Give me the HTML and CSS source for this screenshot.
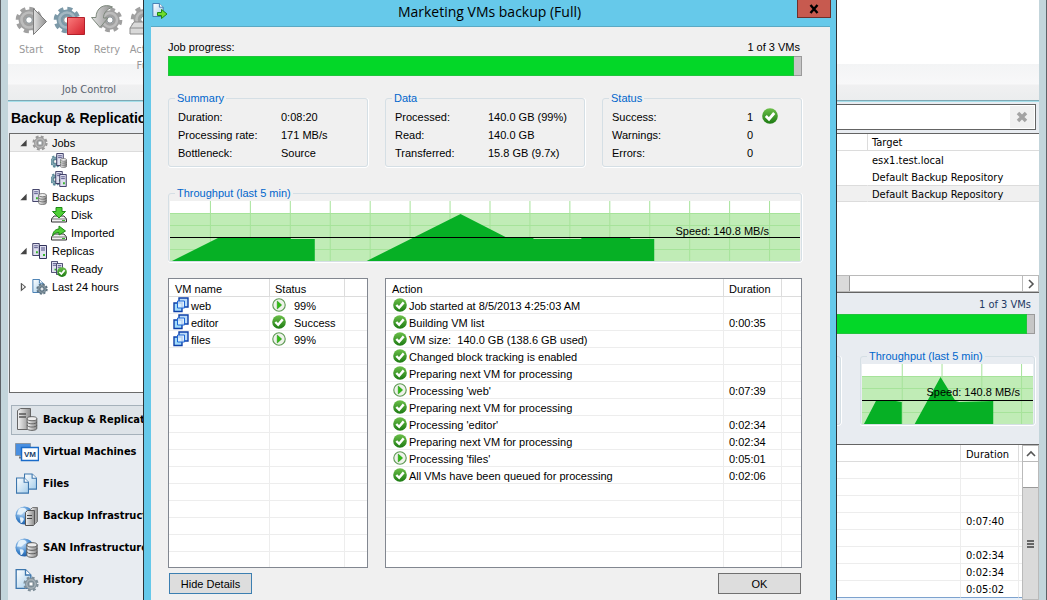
FILE: index.html
```html
<!DOCTYPE html>
<html lang="en">
<head>
  <meta charset="UTF-8" />
  <meta name="viewport" content="width=device-width, initial-scale=1.0" />
  <title>Backup &amp; Replication</title>
  <link rel="stylesheet" href="styles.css">
</head>
<body>

  <!-- icon set -->
  <svg class="sprite" aria-hidden="true">
    <defs>
      <linearGradient id="gGreen" x1="0" y1="0" x2="0" y2="1">
        <stop offset="0" stop-color="#6cc04a" /><stop offset="1" stop-color="#1c7a12" />
      </linearGradient>
      <linearGradient id="gRed" x1="0" y1="0" x2="1" y2="1">
        <stop offset="0" stop-color="#fb7d7d" /><stop offset="1" stop-color="#d41f2c" />
      </linearGradient>
      <linearGradient id="gPage" x1="0" y1="0" x2="1" y2="1">
        <stop offset="0" stop-color="#ffffff" /><stop offset="1" stop-color="#a5cdea" />
      </linearGradient>
      <linearGradient id="gMetal" x1="0" y1="0" x2="1" y2="0">
        <stop offset="0" stop-color="#f6f6f6" /><stop offset="1" stop-color="#8b8b8b" />
      </linearGradient>
      <linearGradient id="gArrow" x1="0" y1="0" x2="1" y2="0">
        <stop offset="0" stop-color="#e2e2e2" /><stop offset="1" stop-color="#8f8f8f" />
      </linearGradient>
      <radialGradient id="gGlobe" cx="0.35" cy="0.3" r="0.8">
        <stop offset="0" stop-color="#cfe6fb" /><stop offset="0.6" stop-color="#3d84cc" /><stop offset="1" stop-color="#1b4f94" />
      </radialGradient>

      <symbol id="check" viewBox="0 0 16 16">
        <circle cx="8" cy="8" r="7.8" fill="url(#gGreen)" />
        <path d="M3.800 8l3.200 3.200L12.200 5" fill="none" stroke="#fff" stroke-width="2.800" />
      </symbol>
      <symbol id="play" viewBox="0 0 16 16">
        <circle cx="8" cy="8" r="7.1" fill="#eef2ea" stroke="#5f9a55" stroke-width="1.300" />
        <path d="M6 3.500l5 4.500-5 4.500z" fill="#2fbf12" stroke="#1d8c0c" stroke-width=".6" />
      </symbol>
      <symbol id="gear" viewBox="0 0 32 32">
        <circle cx="16" cy="16" r="13" fill="none" stroke="currentColor" stroke-width="4.400" stroke-dasharray="5.700 4.510" />
        <circle cx="16" cy="16" r="8" fill="none" stroke="currentColor" stroke-width="8" />
        <circle cx="16" cy="16" r="8.600" fill="none" stroke="#fff" stroke-opacity=".3" stroke-width="3" />
        <circle cx="16" cy="16" r="3.800" fill="#fff" stroke="#6f7a80" stroke-width="1" />
      </symbol>
      <symbol id="db" viewBox="0 0 10 14">
        <path d="M.5 2.500v9c0 2.600 9 2.600 9 0v-9z" fill="url(#gMetal)" stroke="#555" stroke-width=".8" />
        <path d="M.5 5.500c0 2.400 9 2.400 9 0M.5 8.500c0 2.400 9 2.400 9 0" fill="none" stroke="#555" stroke-width=".8" />
        <ellipse cx="5" cy="2.500" rx="4.500" ry="1.900" fill="#eee" stroke="#555" stroke-width=".8" />
      </symbol>
      <symbol id="tower" viewBox="0 0 8 14">
        <path d="M.5 .5h7v13h-7z" fill="#e0e0f0" stroke="#33335c" />
        <path d="M2 3h4M2 5h4" stroke="#4d4d82" />
        <path d="M4 9h2v2H4z" fill="#35b52a" />
      </symbol>
      <symbol id="page" viewBox="0 0 12 15">
        <path d="M.5 .5h7l4 4v10H.5z" fill="url(#gPage)" stroke="#3c76ad" />
        <path d="M7.500 .5v4h4" fill="#fff" stroke="#3c76ad" />
      </symbol>
      <symbol id="drive" viewBox="0 0 16 7">
        <path d="M3 .5h10l2.500 3v3H.5v-3z" fill="#f2f2f2" stroke="#333" />
        <path d="M.5 3.500h15" stroke="#777" />
        <path d="M11 5h3" stroke="#35b52a" />
      </symbol>

      <symbol id="start" viewBox="0 0 32 32">
        <use href="#gear" x="0" y="0" width="28" height="30" />
        <path d="M18.500 3.500v26l13-13z" fill="url(#gArrow)" stroke="#7d7d7d" />
      </symbol>
      <symbol id="stop" viewBox="0 0 32 32">
        <use href="#gear" x="0" y="0" width="28" height="30" />
        <path d="M14.500 12.500h17v17h-17z" fill="url(#gRed)" stroke="#b3202b" />
      </symbol>
      <symbol id="retry" viewBox="0 0 32 32">
        <use href="#gear" x="6" y="1" width="26" height="28" />
        <path d="M.5 12.500l8.500 10 8-9.500h-4.500c0-5 3-8.500 9-11C13-2 5 3 5 12.500z" fill="url(#gArrow)" stroke="#7e897d" />
      </symbol>
      <symbol id="active" viewBox="0 0 32 32">
        <use href="#gear" x="1" y="0" width="28" height="29" />
        <path d="M5 17h22l4 6v6H1v-6z" fill="#d9d9d9" stroke="#8c8c8c" />
        <path d="M1 23h30" stroke="#8c8c8c" />
      </symbol>

      <symbol id="jobBackup" viewBox="0 0 16 16">
        <g color="#5b8a99"><use href="#gear" x="-2" y="2" width="13" height="13" /></g>
        <use href="#tower" x="5" y="0" width="8" height="13" />
        <use href="#db" x="9" y="5" width="7" height="10" />
      </symbol>
      <symbol id="jobReplica" viewBox="0 0 16 16">
        <g color="#5b8a99"><use href="#gear" x="-2" y="2" width="13" height="13" /></g>
        <use href="#tower" x="4" y="0" width="8" height="13" />
        <use href="#tower" x="8" y="3" width="8" height="13" />
      </symbol>
      <symbol id="backups" viewBox="0 0 16 16">
        <use href="#tower" x="0" y="0" width="8" height="13" />
        <use href="#db" x="6" y="4" width="9" height="12" />
      </symbol>
      <symbol id="replicas" viewBox="0 0 16 16">
        <use href="#tower" x="0" y="0" width="8" height="13" />
        <use href="#tower" x="7" y="2" width="8" height="14" />
      </symbol>
      <symbol id="disk" viewBox="0 0 16 16">
        <use href="#drive" x="0" y="8" width="16" height="8" />
        <path d="M5 .5h6v4h3.500L8 11 1.500 4.500H5z" fill="#4fce35" stroke="#1f8a17" />
      </symbol>
      <symbol id="imported" viewBox="0 0 16 16">
        <use href="#drive" x="0" y="8" width="16" height="8" />
        <path d="M1.500 11C2 6 5 4 8 4V1l6.500 5L8 10V7.500C5 7.500 3 8.500 1.500 11z" fill="#4fce35" stroke="#1f8a17" />
      </symbol>
      <symbol id="ready" viewBox="0 0 16 16">
        <use href="#tower" x="0" y="0" width="7" height="12" />
        <use href="#tower" x="5" y="2" width="7" height="12" />
        <use href="#check" x="6" y="6" width="10" height="10" />
      </symbol>
      <symbol id="history" viewBox="0 0 16 16">
        <use href="#page" x="0" y="0" width="12" height="14" />
        <g color="#5c7280"><use href="#gear" x="4" y="4" width="12" height="12" /></g>
      </symbol>
      <symbol id="vm" viewBox="0 0 16 16">
        <path d="M6 1h9v9H6z" fill="#bcdcf8" stroke="#0d3fa8" stroke-width="1.400" />
        <path d="M1 6h8v8.500H1z" fill="#a3dcfa" stroke="#0d3fa8" stroke-width="1.400" />
        <path d="M4.500 4h7v7h-7z" fill="#e6f5ff" fill-opacity=".8" stroke="#1c66d6" />
      </symbol>

      <symbol id="navBackup" viewBox="0 0 24 24">
        <path d="M2.500 2.500l3-2h10v18l-3 3h-10z" fill="url(#gMetal)" stroke="#666" />
        <path d="M4 6h7M4 9h7" stroke="#555" stroke-width="1.500" />
        <use href="#db" x="11" y="8" width="12" height="15" />
      </symbol>
      <symbol id="navVm" viewBox="0 0 24 24">
        <path d="M.5 3.500h15v12H.5z" fill="#4a8fe0" stroke="#8a97a5" />
        <path d="M4 17.500h3" stroke="#777" stroke-width="2" />
        <path d="M6.500 7.500h17v13h-17z" fill="#fff" stroke="#1a6bc9" stroke-width="1.500" />
        <text x="15" y="17" class="vm-mark">VM</text>
      </symbol>
      <symbol id="navFiles" viewBox="0 0 24 24">
        <use href="#page" x="9" y="1" width="13" height="17" />
        <use href="#page" x="1" y="5" width="13" height="17" />
      </symbol>
      <symbol id="globe" viewBox="0 0 20 20">
        <circle cx="10" cy="10" r="9.500" fill="url(#gGlobe)" />
        <path d="M4 3c4-2 7-1 8 1s-3 2-4 4-4 1-6 1zM5 12c3-1 5 1 4 3s-2 3-3 3z" fill="#e3f1fb" />
      </symbol>
      <symbol id="navInfra" viewBox="0 0 24 24">
        <use href="#globe" x="0" y="2" width="19" height="19" />
        <path d="M15.500 5.500l2-2h5v14l-2 2h-5z" fill="url(#gMetal)" stroke="#777" />
        <path d="M10.500 8.500l2-2h7v14l-1 1h-8z" fill="url(#gMetal)" stroke="#555" />
        <path d="M12 11.500h5M12 14.500h5" stroke="#444" />
      </symbol>
      <symbol id="navSan" viewBox="0 0 24 24">
        <use href="#globe" x="0" y="2" width="19" height="19" />
        <use href="#db" x="11" y="6" width="12" height="16" />
      </symbol>
      <symbol id="navHistory" viewBox="0 0 24 24">
        <use href="#page" x="0" y="1" width="17" height="20" />
        <g color="#7f8f99"><use href="#gear" x="8" y="8" width="16" height="16" /></g>
      </symbol>
      <symbol id="job" viewBox="0 0 16 16">
        <use href="#page" x="0" y="0" width="12" height="14" />
        <path d="M5.500 9.500h4v-3L15 11l-5.500 4.500v-3h-4z" fill="#6fdc2c" stroke="#1f8a17" />
      </symbol>
    </defs>
  </svg>

  <!-- main window -->
  <div class="app">
    <div class="ribbon">
      <div class="ribbon-group">
        <div class="ribbon-buttons">
          <button class="tool" disabled><svg class="icon-32"><use href="#start" /></svg>Start</button>
          <button class="tool tool-on"><svg class="icon-32"><use href="#stop" /></svg>Stop</button>
          <button class="tool" disabled><svg class="icon-32"><use href="#retry" /></svg>Retry</button>
          <button class="tool" disabled><svg class="icon-32"><use href="#active" /></svg>Active Full</button>
        </div>
        <div class="ribbon-label">Job Control</div>
      </div>
    </div>

    <div class="workspace">
      <aside class="sidebar">
        <h1>Backup &amp; Replication</h1>
        <ul class="tree">
          <li class="tree-row selected"><i class="arrow open"></i><svg class="icon-16 gear-grey"><use href="#gear" /></svg>Jobs</li>
          <li class="tree-row child"><svg class="icon-16"><use href="#jobBackup" /></svg>Backup</li>
          <li class="tree-row child"><svg class="icon-16"><use href="#jobReplica" /></svg>Replication</li>
          <li class="tree-row"><i class="arrow open"></i><svg class="icon-16"><use href="#backups" /></svg>Backups</li>
          <li class="tree-row child"><svg class="icon-16"><use href="#disk" /></svg>Disk</li>
          <li class="tree-row child"><svg class="icon-16"><use href="#imported" /></svg>Imported</li>
          <li class="tree-row"><i class="arrow open"></i><svg class="icon-16"><use href="#replicas" /></svg>Replicas</li>
          <li class="tree-row child"><svg class="icon-16"><use href="#ready" /></svg>Ready</li>
          <li class="tree-row"><i class="arrow"></i><svg class="icon-16"><use href="#history" /></svg>Last 24 hours</li>
        </ul>
        <nav class="nav">
          <a class="nav-item active" href="#backup"><svg class="icon-24"><use href="#navBackup" /></svg>Backup &amp; Replication</a>
          <a class="nav-item" href="#vms"><svg class="icon-24"><use href="#navVm" /></svg>Virtual Machines</a>
          <a class="nav-item" href="#files"><svg class="icon-24"><use href="#navFiles" /></svg>Files</a>
          <a class="nav-item" href="#infra"><svg class="icon-24"><use href="#navInfra" /></svg>Backup Infrastructure</a>
          <a class="nav-item" href="#san"><svg class="icon-24"><use href="#navSan" /></svg>SAN Infrastructure</a>
          <a class="nav-item" href="#history"><svg class="icon-24"><use href="#navHistory" /></svg>History</a>
        </nav>
      </aside>

      <main class="content">
        <div class="search">
          <input type="text" aria-label="Search" />
          <button class="clear" aria-label="Clear search">
            <svg class="icon-12" viewBox="0 0 12 12"><path d="M2 2l8 8M10 2l-8 8" stroke="#a3a3a3" stroke-width="3.500" /></svg>
          </button>
        </div>

        <div class="jobs">
          <table class="job-table">
            <colgroup><col><col class="col-target"></colgroup>
            <thead><tr><th></th><th>Target</th></tr></thead>
            <tbody>
              <tr><td></td><td>esx1.test.local</td></tr>
              <tr><td></td><td>Default Backup Repository</td></tr>
              <tr class="current"><td></td><td>Default Backup Repository</td></tr>
            </tbody>
          </table>
          <div class="hscroll">
            <div class="hthumb"></div>
            <button class="hnext" aria-label="Scroll right">
              <svg class="icon-12" viewBox="0 0 12 12"><path d="M4 2l4 4-4 4" fill="none" stroke="#555" stroke-width="1.600" /></svg>
            </button>
          </div>
        </div>

        <div class="details">
          <div class="count">1 of 3 VMs</div>
          <div class="bar"><div class="bar-fill bar-fill-small"></div></div>
          <div class="detail-groups">
            <fieldset class="group group-blank"></fieldset>
            <fieldset class="group group-chart">
              <legend>Throughput (last 5 min)</legend>
              <div class="chart">
                <svg class="plot" viewBox="0 0 172 60" preserveAspectRatio="none" shape-rendering="crispEdges">
                  <rect width="172" height="60" fill="#fff" />
                  <rect y="12" width="172" height="48" fill="#c0ecb6" />
                  <path d="M40.500 0v60M80.500 0v60M120.500 0v60M160.500 0v60M0 12.500h172M0 24.500h172M0 48.500h172" stroke="#a6e39a" />
                  <path d="M2 60L14 37h20l6 1v22zM53 60L79 13l15 24 4 1 34-1v1v22z" fill="#06b025" shape-rendering="auto" />
                  <path d="M0 36.500h172" stroke="#000" />
                </svg>
                <span class="speed speed-small">Speed: 140.8 MB/s</span>
              </div>
            </fieldset>
          </div>
        </div>

        <div class="log">
          <table class="grid log-table">
            <colgroup><col><col class="col-dur"><col class="col-tiny"></colgroup>
            <thead><tr><th></th><th>Duration</th><th></th></tr></thead>
            <tbody>
              <tr><td></td><td></td><td></td></tr>
              <tr><td></td><td></td><td></td></tr>
              <tr><td></td><td></td><td></td></tr>
              <tr><td></td><td>0:07:40</td><td></td></tr>
              <tr><td></td><td></td><td></td></tr>
              <tr><td></td><td>0:02:34</td><td></td></tr>
              <tr><td></td><td>0:02:34</td><td></td></tr>
              <tr class="before-focus"><td></td><td>0:05:02</td><td></td></tr>
              <tr class="focus"><td></td><td></td><td></td></tr>
            </tbody>
          </table>
          <div class="vscroll">
            <button class="vup" aria-label="Scroll up">
              <svg class="icon-12" viewBox="0 0 12 12"><path d="M2 8l4-4 4 4" fill="none" stroke="#555" stroke-width="1.600" /></svg>
            </button>
            <div class="vthumb"><i class="grip"></i></div>
          </div>
        </div>
      </main>
    </div>
  </div>

  <!-- job statistics dialog -->
  <div class="dialog" role="dialog" aria-labelledby="dialogTitle">
    <header class="titlebar">
      <svg class="icon-16"><use href="#job" /></svg>
      <h2 id="dialogTitle">Marketing VMs backup (Full)</h2>
      <button class="close" aria-label="Close">
        <svg class="icon-12" viewBox="0 0 12 12"><path d="M2.500 2l7 8M9.500 2l-7 8" stroke="#000" stroke-width="2.400" /></svg>
      </button>
    </header>

    <div class="dialog-body">
      <div class="progress-head"><span>Job progress:</span><span>1 of 3 VMs</span></div>
      <div class="bar"><div class="bar-fill"></div></div>

      <div class="groups">
        <fieldset class="group">
          <legend>Summary</legend>
          <dl class="facts facts-summary">
            <dt>Duration:</dt><dd>0:08:20</dd>
            <dt>Processing rate:</dt><dd>171 MB/s</dd>
            <dt>Bottleneck:</dt><dd>Source</dd>
          </dl>
        </fieldset>
        <fieldset class="group">
          <legend>Data</legend>
          <dl class="facts facts-data">
            <dt>Processed:</dt><dd>140.0 GB (99%)</dd>
            <dt>Read:</dt><dd>140.0 GB</dd>
            <dt>Transferred:</dt><dd>15.8 GB (9.7x)</dd>
          </dl>
        </fieldset>
        <fieldset class="group">
          <legend>Status</legend>
          <dl class="facts facts-status">
            <dt>Success:</dt><dd>1<svg class="icon-16"><use href="#check" /></svg></dd>
            <dt>Warnings:</dt><dd>0</dd>
            <dt>Errors:</dt><dd>0</dd>
          </dl>
        </fieldset>
      </div>

      <fieldset class="group group-chart">
        <legend>Throughput (last 5 min)</legend>
        <div class="chart">
          <svg class="plot" viewBox="0 0 631 60" preserveAspectRatio="none" shape-rendering="crispEdges">
            <rect width="631" height="60" fill="#fff" />
            <rect y="12" width="631" height="48" fill="#c0ecb6" />
            <path d="M40.500 0v60M80.500 0v60M120.500 0v60M160.500 0v60M200.500 0v60M240.500 0v60M280.500 0v60M320.500 0v60M360.500 0v60M400.500 0v60M440.500 0v60M480.500 0v60M520.500 0v60M560.500 0v60M600.500 0v60M0 12.500h631M0 24.500h631M0 48.500h631" stroke="#a6e39a" />
            <path d="M2 60L48 37h73v1h24v22zM197 60L291 13l47 24h26v1h48v-1h49v1h24v22z" fill="#06b025" shape-rendering="auto" />
            <path d="M0 36.500h631" stroke="#000" />
          </svg>
          <span class="speed">Speed: 140.8 MB/s</span>
        </div>
      </fieldset>

      <div class="lists">
        <div class="list">
          <table class="grid vm-table">
            <colgroup><col><col class="col-status"><col class="col-rest-vm"></colgroup>
            <thead><tr><th>VM name</th><th>Status</th><th></th></tr></thead>
            <tbody>
              <tr><td><svg class="icon-16"><use href="#vm" /></svg>web</td><td class="state"><svg class="icon-14"><use href="#play" /></svg>99%</td><td></td></tr>
              <tr><td><svg class="icon-16"><use href="#vm" /></svg>editor</td><td class="state"><svg class="icon-14"><use href="#check" /></svg>Success</td><td></td></tr>
              <tr><td><svg class="icon-16"><use href="#vm" /></svg>files</td><td class="state"><svg class="icon-14"><use href="#play" /></svg>99%</td><td></td></tr>
              <tr><td></td><td></td><td></td></tr>
              <tr><td></td><td></td><td></td></tr>
              <tr><td></td><td></td><td></td></tr>
              <tr><td></td><td></td><td></td></tr>
              <tr><td></td><td></td><td></td></tr>
              <tr><td></td><td></td><td></td></tr>
              <tr><td></td><td></td><td></td></tr>
              <tr><td></td><td></td><td></td></tr>
              <tr><td></td><td></td><td></td></tr>
              <tr><td></td><td></td><td></td></tr>
              <tr><td></td><td></td><td></td></tr>
              <tr><td></td><td></td><td></td></tr>
              <tr class="last"><td></td><td></td><td></td></tr>
            </tbody>
          </table>
        </div>

        <div class="list">
          <table class="grid action-table">
            <colgroup><col><col class="col-dur"><col class="col-rest"></colgroup>
            <thead><tr><th>Action</th><th>Duration</th><th></th></tr></thead>
            <tbody>
              <tr><td><svg class="icon-14"><use href="#check" /></svg>Job started at 8/5/2013 4:25:03 AM</td><td></td><td></td></tr>
              <tr><td><svg class="icon-14"><use href="#check" /></svg>Building VM list</td><td>0:00:35</td><td></td></tr>
              <tr><td><svg class="icon-14"><use href="#check" /></svg>VM size:&nbsp; 140.0 GB (138.6 GB used)</td><td></td><td></td></tr>
              <tr><td><svg class="icon-14"><use href="#check" /></svg>Changed block tracking is enabled</td><td></td><td></td></tr>
              <tr><td><svg class="icon-14"><use href="#check" /></svg>Preparing next VM for processing</td><td></td><td></td></tr>
              <tr><td><svg class="icon-14"><use href="#play" /></svg>Processing 'web'</td><td>0:07:39</td><td></td></tr>
              <tr><td><svg class="icon-14"><use href="#check" /></svg>Preparing next VM for processing</td><td></td><td></td></tr>
              <tr><td><svg class="icon-14"><use href="#check" /></svg>Processing 'editor'</td><td>0:02:34</td><td></td></tr>
              <tr><td><svg class="icon-14"><use href="#check" /></svg>Preparing next VM for processing</td><td>0:02:34</td><td></td></tr>
              <tr><td><svg class="icon-14"><use href="#play" /></svg>Processing 'files'</td><td>0:05:01</td><td></td></tr>
              <tr><td><svg class="icon-14"><use href="#check" /></svg>All VMs have been queued for processing</td><td>0:02:06</td><td></td></tr>
              <tr><td></td><td></td><td></td></tr>
              <tr><td></td><td></td><td></td></tr>
              <tr><td></td><td></td><td></td></tr>
              <tr><td></td><td></td><td></td></tr>
              <tr class="last"><td></td><td></td><td></td></tr>
            </tbody>
          </table>
        </div>
      </div>

      <div class="actions">
        <button class="btn btn-default">Hide Details</button>
        <button class="btn">OK</button>
      </div>
    </div>
  </div>

</body>
</html>
```
FILE: styles.css
```css
* {
  box-sizing: border-box;
}
body {
  margin: 0;
  height: 100vh;
  overflow: hidden;
  position: relative;
  font-family: "Liberation Sans", Arial, sans-serif;
  font-size: 11px;
  line-height: 12px;
  color: #000;
}
button {
  font: inherit;
  padding: 0;
}
svg {
  display: block;
  flex: none;
}
.sprite {
  position: absolute;
  width: 0;
  height: 0;
}
.icon-12 { width: 12px; height: 12px; }
.icon-14 { width: 14px; height: 14px; }
.icon-16 { width: 16px; height: 16px; }
.icon-24 { width: 24px; height: 24px; }
.icon-32 { width: 32px; height: 32px; }
.vm-mark {
  font: bold 8px "Liberation Sans", Arial, sans-serif;
  text-anchor: middle;
  fill: #1d3f6b;
}

/* main window */
.app {
  height: 100%;
  display: flex;
  flex-direction: column;
  border: solid #c3d5db;
  border-width: 0 7px;
  outline: 1px solid #5d6166;
  margin: 0 1px;
  background: #e8ecf1;
  font-family: "DejaVu Sans Condensed", Tahoma, sans-serif;
}
.ribbon {
  height: 101px;
  flex: none;
  background: linear-gradient(#fff 0 64px, #f3f4f5 64px, #f8f8f9 84px, #f0f0f1 85px, #ebedee);
  border-bottom: 1px solid #7fa9b5;
  box-shadow: 0 1px #a5dfea;
}
.ribbon-group {
  width: 162px;
  padding: 5px 4px 0;
}
.ribbon-buttons {
  display: flex;
  height: 79px;
}
.tool {
  width: 38px;
  display: flex;
  flex-direction: column;
  align-items: center;
  gap: 5px;
  border: 0;
  background: none;
  color: #999;
  line-height: 16px;
}
.tool svg {
  color: #a0a0a0;
}
.tool-on {
  color: #222;
}
.tool-on svg {
  color: #7c99a8;
}
.ribbon-label {
  text-align: center;
  color: #5a6470;
}
.workspace {
  flex: 1;
  min-height: 0;
  display: flex;
}

/* sidebar */
.sidebar {
  width: 240px;
  flex: none;
  padding-left: 1px;
}
.sidebar h1 {
  margin: 0;
  padding: 8px 2px 6px;
  font: bold 14px/18px "Liberation Sans", Arial, sans-serif;
}
.tree {
  height: 260px;
  margin: 0;
  padding: 0;
  list-style: none;
  background: #fff;
  border: 1px solid #6b6b6b;
  font-family: "Liberation Sans", Arial, sans-serif;
}
.tree-row {
  height: 18px;
  display: flex;
  align-items: center;
  gap: 4px;
  padding-left: 9px;
}
.tree-row.child {
  padding-left: 41px;
}
.tree-row.selected {
  background: #f0f0f0;
  box-shadow: inset 0 -1px #dcdcdc;
}
.gear-grey {
  color: #999;
}
.arrow {
  width: 9px;
  height: 9px;
  background: #555;
  clip-path: polygon(20% 0, 80% 50%, 20% 100%, 20% 85%, 62% 50%, 35% 22%, 35% 80%, 20% 90%);
}
.arrow.open {
  background: #444;
  clip-path: polygon(85% 15%, 85% 85%, 15% 85%);
}
.nav {
  padding: 12px 2px;
  display: flex;
  flex-direction: column;
  gap: 2px;
}
.nav-item {
  height: 30px;
  display: flex;
  align-items: center;
  gap: 4px;
  padding-left: 3px;
  border: 1px solid transparent;
  color: #000;
  font-weight: bold;
  text-decoration: none;
}
.nav-item.active {
  background: #dde3e8;
  border-color: #a5b1bb;
}

/* job list */
.content {
  flex: 1;
  min-width: 0;
  display: flex;
  flex-direction: column;
}
.search {
  height: 26px;
  flex: none;
  margin: 3px 3px 3px 0;
  padding: 1px;
  display: flex;
  background: #fff;
  border: 1px solid #646464;
}
.search input {
  flex: 1;
  border: 0;
  background: none;
}
.clear {
  width: 24px;
  display: grid;
  place-items: center;
  border: 0;
  background: #f0f0f0;
}
.jobs {
  height: 160px;
  flex: none;
  display: flex;
  flex-direction: column;
  justify-content: space-between;
  background: #fff;
  border: solid #646464;
  border-width: 1px 0;
}
.job-table,
.grid {
  width: 100%;
  table-layout: fixed;
  border-collapse: separate;
  border-spacing: 0;
}
.job-table th,
.job-table td {
  height: 17px;
  padding: 2px 4px 0;
  text-align: left;
  font-weight: normal;
}
.job-table th {
  border-bottom: 1px solid #dcdcdc;
}
.job-table th + th {
  border-left: 1px solid #dcdcdc;
}
.job-table td + td {
  border-left: 1px solid transparent;
}
.job-table .current td {
  background: #f0f0f0;
  border-top: 1px solid #dcdcdc;
  border-bottom: 1px solid #dcdcdc;
}
.col-target {
  width: 172px;
}
.hscroll {
  height: 17px;
  display: flex;
  justify-content: space-between;
  border: 1px solid #bababa;
}
.hthumb {
  flex: 0 1 601px;
  background: #dadada;
  border-right: 1px solid #9a9a9a;
}
.hnext {
  width: 16px;
  display: grid;
  place-items: center;
  border: 0;
  border-left: 1px solid #bababa;
  background: #fff;
}

/* job details */
.details {
  height: 151px;
  flex: none;
  padding: 6px 4px 0 0;
}
.count {
  height: 15px;
  padding-right: 4px;
  text-align: right;
  color: #1f3864;
}
.bar {
  height: 20px;
  background: #c6c6c6;
  border: 1px solid #9a9a9a;
}
.bar-fill {
  width: 99%;
  height: 20px;
  margin: -1px;
  background: #03d728;
  border: 1px solid #21c43c;
}
.bar-fill.bar-fill-small {
  width: calc(100% - 6px);
}
.detail-groups {
  display: flex;
  gap: 19px;
  margin-top: 16px;
}
.detail-groups .group-blank {
  flex: 1;
  margin-top: 6px;
}
.detail-groups .group-chart {
  width: 175px;
  margin: 0;
  font-family: "Liberation Sans", Arial, sans-serif;
}

/* action log */
.log {
  flex: 1;
  min-height: 0;
  display: flex;
  background: #fff;
  border-top: 1px solid #646464;
  overflow: hidden;
}
.log-table {
  flex: 1;
  align-self: flex-start;
}
.vscroll {
  width: 17px;
  display: flex;
  flex-direction: column;
  border: 1px solid #bababa;
}
.vup {
  height: 16px;
  display: grid;
  place-items: center;
  border: 0;
  border-bottom: 1px solid #bababa;
  background: #fff;
}
.vthumb {
  flex: 1;
  margin-top: 25px;
  display: grid;
  place-items: center;
  background: #dadada;
  border-top: 1px solid #9a9a9a;
}
.grip {
  width: 7px;
  height: 8px;
  background: repeating-linear-gradient(#666 0 2px, transparent 2px 3px);
}

/* grids shared by the window and the dialog */
.grid th,
.grid td {
  height: 17px;
  padding: 2px 5px 0;
  text-align: left;
  font-weight: normal;
  white-space: nowrap;
  border-right: 1px solid #ededed;
  border-bottom: 1px solid #ededed;
}
.grid th {
  padding-top: 3px;
  border-color: #dcdcdc;
}
.list .grid th {
  height: 18px;
}
.grid th:last-child,
.grid td:last-child {
  border-right: 0;
}
.grid .last td {
  height: 15px;
  border-bottom: 0;
}
.grid td svg {
  display: inline-block;
  vertical-align: middle;
  margin: -5px 2px -1px 0;
}
.grid th:first-child {
  padding-left: 6px;
}
.vm-table td:first-child {
  padding-left: 4px;
}
.action-table td:first-child {
  padding-left: 7px;
}
.grid td.state {
  padding-left: 2px;
}
.grid td.state svg {
  margin-right: 8px;
}
.grid .before-focus td {
  border-bottom-color: #7da2ce;
}
.grid .focus td {
  background: #e8f1fb;
}
.col-dur { width: 58px; }
.col-tiny { width: 3px; }
.col-status { width: 75px; }
.col-rest { width: 19px; }
.col-rest-vm { width: 22px; }
.log-table th:last-child,
.log-table td:last-child {
  padding: 0;
}

/* dialog */
.dialog {
  position: absolute;
  top: 0;
  left: 143px;
  right: 210px;
  min-height: 100%;
  display: flex;
  flex-direction: column;
  border: solid #2c3236;
  border-width: 0 1px;
  background: #66c9ea;
}
.titlebar {
  height: 26px;
  display: flex;
  align-items: flex-start;
  padding: 0 5px 0 8px;
}
.titlebar > .icon-16 {
  margin-top: 3px;
}
.titlebar h2 {
  flex: 1;
  margin: 0;
  padding-left: 14px;
  text-align: center;
  font: normal 14px/24px "Open Sans", "Segoe UI", sans-serif;
}
.close {
  width: 34px;
  height: 18px;
  display: grid;
  place-items: center;
  border: 1px solid #6e302b;
  border-top: 0;
  background: #c75a4f;
}
.dialog-body {
  flex: 1;
  margin: 0 6px 0 7px;
  padding: 14px 28px 6px 17px;
  border-top: 1px solid #5aa9c4;
  background: #f0f0f0;
}
.progress-head {
  height: 15px;
  display: flex;
  justify-content: space-between;
  padding-right: 2px;
}
.groups {
  display: grid;
  grid-template-columns: repeat(3, 1fr);
  gap: 17px;
  margin: 16px 0 20px;
}
.group {
  min-width: 0;
  margin: 0;
  padding: 4px 9px;
  border: 1px solid #d5dfe5;
  border-radius: 3px;
  box-shadow: 0 1px #fff, 1px 0 #fff;
}
.group legend {
  padding: 0 2px;
  margin-left: -3px;
  color: #0066cc;
}
.facts {
  display: grid;
  line-height: 18px;
  margin: 0;
}
.facts dd {
  margin: 0;
  display: flex;
  gap: 9px;
}
.facts-summary { grid-template-columns: 103px 1fr; }
.facts-data { grid-template-columns: 93px 1fr; }
.facts-status { grid-template-columns: 135px 1fr; }
.group-chart {
  padding: 2px 1px 0;
}
.group-chart legend {
  margin-left: 5px;
}
.chart {
  position: relative;
}
.plot {
  width: 100%;
  height: 60px;
}
.speed {
  position: absolute;
  top: 24px;
  right: 31px;
}
.speed-small {
  top: 22px;
  right: 13px;
}
.lists {
  display: grid;
  grid-template-columns: 200px 1fr;
  gap: 17px;
  margin: 16px 0 5px;
}
.list {
  background: #fff;
  border: 1px solid #828790;
}
.actions {
  display: flex;
  justify-content: space-between;
  padding: 0 1px;
}
.btn {
  width: 83px;
  height: 21px;
  border: 1px solid #707070;
  background: #dddddd;
}
.btn-default {
  border-color: #3c7fb1;
}
```
